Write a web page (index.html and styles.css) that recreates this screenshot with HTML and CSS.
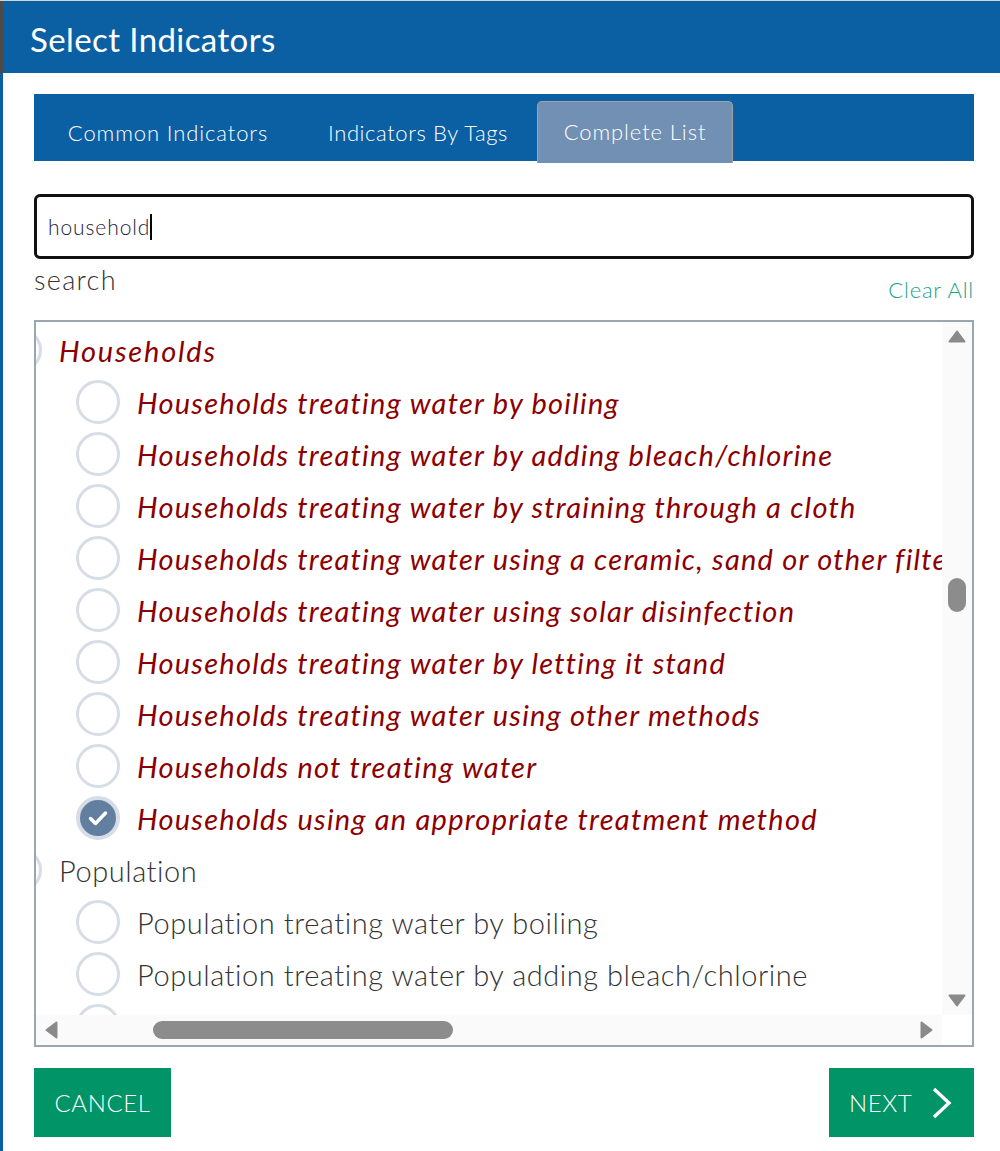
FILE: index.html
```html
<!DOCTYPE html>
<html lang="en">
<head>
<meta charset="utf-8">
<title>Select Indicators</title>
<link rel="stylesheet" href="styles.css">
</head>
<body>
<div class="dialog">
  <header class="dlg-header">
    <h1 class="dlg-title">Select Indicators</h1>
  </header>
  <main class="dlg-body">
    <nav class="tabs">
      <div class="tab tab-common">Common Indicators</div>
      <div class="tab tab-tags">Indicators By Tags</div>
      <div class="tab tab-list active">Complete List</div>
    </nav>

    <div class="search-box">
      <span class="search-text">household</span><span class="caret"></span>
    </div>
    <div class="search-row">
      <span class="search-label">search</span>
      <span class="clear-all">Clear All</span>
    </div>

    <div class="listbox">
      <div class="viewport">
        <div class="list-content">
          <div class="row group selected-group">
            <span class="radio"></span><span class="label">Households</span>
          </div>
          <div class="row item sel"><span class="radio"></span><span class="label">Households treating water by boiling</span></div>
          <div class="row item sel"><span class="radio"></span><span class="label">Households treating water by adding bleach/chlorine</span></div>
          <div class="row item sel"><span class="radio"></span><span class="label">Households treating water by straining through a cloth</span></div>
          <div class="row item sel"><span class="radio"></span><span class="label">Households treating water using a ceramic, sand or other filter</span></div>
          <div class="row item sel"><span class="radio"></span><span class="label">Households treating water using solar disinfection</span></div>
          <div class="row item sel"><span class="radio"></span><span class="label">Households treating water by letting it stand</span></div>
          <div class="row item sel"><span class="radio"></span><span class="label">Households treating water using other methods</span></div>
          <div class="row item sel"><span class="radio"></span><span class="label">Households not treating water</span></div>
          <div class="row item sel">
            <span class="radio checked">
              <svg viewBox="0 0 44 44" width="44" height="44"><path d="M14.5 22.5 L19.5 27.5 L29.5 17" fill="none" stroke="#fff" stroke-width="3.4" stroke-linecap="round" stroke-linejoin="round"/></svg>
            </span><span class="label">Households using an appropriate treatment method</span>
          </div>
          <div class="row group">
            <span class="radio"></span><span class="label">Population</span>
          </div>
          <div class="row item"><span class="radio"></span><span class="label">Population treating water by boiling</span></div>
          <div class="row item"><span class="radio"></span><span class="label">Population treating water by adding bleach/chlorine</span></div>
          <div class="row item"><span class="radio"></span><span class="label">Population treating water by straining through a cloth</span></div>
        </div>
      </div>
      <div class="vscroll">
        <svg class="arrow" viewBox="0 0 18 13" width="18" height="13"><path d="M9 1.5 L16.5 11.5 L1.5 11.5 Z" fill="#8a8a8a" stroke="#8a8a8a" stroke-width="2" stroke-linejoin="round"/></svg>
        <div class="vtrack"><div class="vthumb"></div></div>
        <svg class="arrow" viewBox="0 0 18 13" width="18" height="13"><path d="M9 11.5 L16.5 1.5 L1.5 1.5 Z" fill="#8a8a8a" stroke="#8a8a8a" stroke-width="2" stroke-linejoin="round"/></svg>
      </div>
      <div class="hscroll">
        <svg class="arrow" viewBox="0 0 13 18" width="13" height="18"><path d="M1.5 9 L11.5 1.5 L11.5 16.5 Z" fill="#8a8a8a" stroke="#8a8a8a" stroke-width="2" stroke-linejoin="round"/></svg>
        <div class="htrack"><div class="hthumb"></div></div>
        <svg class="arrow" viewBox="0 0 13 18" width="13" height="18"><path d="M11.5 9 L1.5 1.5 L1.5 16.5 Z" fill="#8a8a8a" stroke="#8a8a8a" stroke-width="2" stroke-linejoin="round"/></svg>
      </div>
      <div class="corner"></div>
    </div>

    <footer class="actions">
      <button class="btn btn-cancel">CANCEL</button>
      <button class="btn btn-next">NEXT
        <svg viewBox="0 0 24 32" width="24" height="32"><path d="M4 2 L19 16 L4 30" fill="none" stroke="#fff" stroke-width="3.4"/></svg>
      </button>
    </footer>
  </main>
</div>
</body>
</html>
```

FILE: styles.css
```css
* { box-sizing: border-box; }

html, body {
  margin: 0;
  padding: 0;
  background: #fff;
}

body {
  font-family: "Lato", "Open Sans", sans-serif;
  color: #333;
}

.dialog {
  width: 1000px;
  height: 1151px;
  padding-left: 3px;
  border-top: 1px solid #d4d4d4;
  background:
    linear-gradient(#4a4a4a 0 72px, #0b5fa5 72px) left top / 3px 100% no-repeat,
    #fff;
  overflow: hidden;
}

.dlg-header {
  height: 72px;
  background: #0b5fa3;
  display: flex;
  align-items: center;
  padding-left: 27px;
}

.dlg-title {
  margin: 0;
  font-size: 33px;
  font-weight: 400;
  color: #fff;
  letter-spacing: 0.4px;
  padding-top: 3px;
}

.dlg-body {
  padding: 21px 26px 0 31px;
}

/* Tabs */
.tabs {
  height: 67px;
  background: #0b5fa3;
  display: flex;
  align-items: flex-end;
  padding-left: 2px;
}

.tab {
  height: 60px;
  display: flex;
  align-items: center;
  justify-content: center;
  font-size: 22px;
  font-weight: 300;
  color: #fff;
  letter-spacing: 0.9px;
  padding-top: 2px;
}

.tab-common { width: 264px; }
.tab-tags { width: 236px; letter-spacing: 0.6px; }
.tab-list { width: 196px; margin-left: 1px; }

.tab.active {
  height: 62px;
  margin-bottom: -2px;
  background: #7290b4;
  border: 1px solid #a3a3a3;
  border-bottom: none;
  border-radius: 5px 5px 0 0;
  padding-top: 0;
  padding-bottom: 2px;
}

/* Search */
.search-box {
  margin-top: 33px;
  height: 65px;
  border: 3px solid #111;
  border-radius: 6px;
  display: flex;
  align-items: center;
  padding-left: 11px;
}

.search-text {
  font-size: 21px;
  font-weight: 300;
  color: #1b1b40;
  letter-spacing: 0.9px;
}

.caret {
  display: inline-block;
  width: 2px;
  height: 26px;
  background: #000;
  margin-left: 0;
}

.search-row {
  height: 61px;
  display: flex;
  justify-content: space-between;
  align-items: flex-start;
}

.search-label {
  margin-top: 4px;
  font-size: 27px;
  font-weight: 300;
  color: #333;
  letter-spacing: 1.3px;
}

.clear-all {
  margin-top: 17px;
  font-size: 22px;
  font-weight: 300;
  color: #17a088;
  letter-spacing: 0.8px;
}

/* Listbox */
.listbox {
  height: 727px;
  border: 2px solid #9ba6ae;
  display: grid;
  grid-template-columns: 1fr 30px;
  grid-template-rows: 1fr 30px;
}

.viewport {
  overflow: hidden;
  position: relative;
}

.list-content {
  margin-left: -38px;
  padding-top: 2px;
  width: 1200px;
}

.row {
  height: 52px;
  display: flex;
  align-items: center;
  white-space: nowrap;
}

.row.item {
  padding-left: 78px;
}

.radio {
  flex: none;
  width: 44px;
  height: 44px;
  border-radius: 50%;
  border: 3px solid #d6dde6;
  background: #fff;
  margin-right: 17px;
}

.radio.checked {
  border: 4px solid #d6dde6;
  background: #637fa0;
  position: relative;
}

.radio.checked svg {
  position: absolute;
  left: -4px;
  top: -4px;
}

.label {
  font-size: 29px;
  font-weight: 300;
  color: #333;
  letter-spacing: 0.55px;
}

.row.sel .label,
.row.selected-group .label {
  color: #8c0000;
  font-style: italic;
  font-weight: 400;
  letter-spacing: 1.25px;
}

.row.selected-group .label {
  letter-spacing: 1.8px;
}

/* Scrollbars */
.vscroll {
  background: #fafafa;
  display: flex;
  flex-direction: column;
  align-items: center;
  padding: 8px 0 8px;
}

.vtrack {
  flex: 1;
  width: 100%;
  padding-top: 235px;
  display: flex;
  justify-content: center;
}

.vthumb {
  width: 18px;
  height: 34px;
  border-radius: 9px;
  background: #8c8c8c;
}

.hscroll {
  background: #fafafa;
  display: flex;
  align-items: center;
  padding: 0 9px;
}

.htrack {
  flex: 1;
  height: 100%;
  display: flex;
  align-items: center;
  padding-left: 95px;
}

.hthumb {
  width: 300px;
  height: 18px;
  border-radius: 9px;
  background: #8c8c8c;
}

.corner {
  background: #fff;
}

/* Footer */
.actions {
  margin-top: 21px;
  display: flex;
  justify-content: space-between;
}

.btn {
  height: 69px;
  border: none;
  background: #009467;
  color: #fff;
  font-family: "Lato", "Open Sans", sans-serif;
  font-size: 24px;
  font-weight: 300;
  letter-spacing: 0.6px;
  display: flex;
  align-items: center;
  padding: 0;
}

.btn-cancel {
  width: 137px;
  justify-content: center;
}

.btn-next {
  width: 145px;
  padding-left: 20px;
  gap: 18px;
}
```
